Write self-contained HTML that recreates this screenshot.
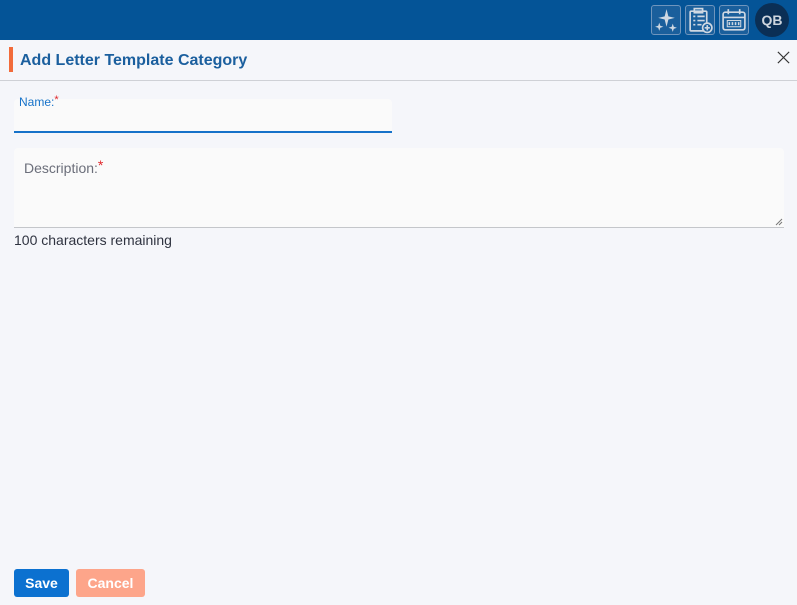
<!DOCTYPE html>
<html><head><style>
body{margin:0;width:797px;height:605px;background:#f5f6fa;font-family:"Liberation Sans",sans-serif;position:relative;overflow:hidden}
.top{position:absolute;left:0;top:0;width:797px;height:40px;background:#045497}
.ib{position:absolute;top:5px;width:30px;height:30px;border:1px solid #6f95bd;border-radius:3px;box-sizing:border-box;background:#1a5f9c}
.av{position:absolute;left:755px;top:3px;width:34px;height:34px;border-radius:50%;background:#0b2f55;color:#cfd6de;font-weight:bold;font-size:14px;text-align:center;line-height:34px}
.hd{position:absolute;top:40px;left:0;width:797px;height:40px;border-bottom:1px solid #cfd1d6}
.bar{position:absolute;left:9px;top:7px;width:4px;height:25px;background:#f26b3a}
.title{position:absolute;left:20px;top:12px;font-size:16px;font-weight:bold;color:#1b5f9e}
.x{position:absolute;left:776px;top:10px}
.name{position:absolute;left:14px;top:99px;width:378px;height:32px;background:#fafafa;border-bottom:2px solid #1672c9;border-radius:4px 4px 0 0;box-sizing:border-box;height:34px}
.lbl{position:absolute;font-size:12px;color:#1672c9;left:19px;top:94px}
.desc{position:absolute;left:14px;top:148px;width:770px;height:79px;background:#fafafa;border-bottom:1px solid #c4c6ca;border-radius:4px 4px 0 0}
.dl{position:absolute;left:24px;top:157px;font-size:14px;color:#6b6e7a}
.r{color:#e0262a}
.rem{position:absolute;left:14px;top:232px;font-size:14px;color:#2f3340}
.btn{position:absolute;top:569px;height:28px;border-radius:3px;color:#fff;font-weight:bold;font-size:14px;text-align:center;line-height:28px}
</style></head><body>
<div class="top">
<div class="ib" style="left:651px"><svg width="28" height="28" viewBox="0 0 27 27"><path d="M14 3 L15.8 10 L22 11.5 L15.8 13 L14 20 L12.2 13 L6 11.5 L12.2 10Z" fill="#cfd8e2"/><path d="M7 16 L8 19 L11 20 L8 21 L7 24 L6 21 L3 20 L6 19Z" fill="#cfd8e2"/><path d="M20 17 L21 20 L24 21 L21 22 L20 25 L19 22 L16 21 L19 20Z" fill="#cfd8e2"/></svg></div>
<div class="ib" style="left:685px"><svg width="28" height="28" viewBox="0 0 27 27" fill="none" stroke="#cfd8e2" stroke-width="1.6"><rect x="4" y="5" width="16" height="19" rx="1"/><rect x="8" y="2.5" width="8" height="4"/><path d="M7 10h2M11 10h7M7 14h2M11 14h7M7 18h2M11 18h4"/><circle cx="20.5" cy="21" r="4.5" fill="#1a5f9c"/><path d="M20.5 18.5v5M18 21h5"/></svg></div>
<div class="ib" style="left:719px"><svg width="28" height="28" viewBox="0 0 27 27" fill="none" stroke="#cfd8e2" stroke-width="1.6"><rect x="3" y="6" width="21" height="17" rx="2"/><path d="M8 3v5M19 3v5M3 11h21"/><rect x="7" y="14" width="13" height="6" stroke-width="1"/><path d="M9 15.5v3M12 15.5v3M15 15.5v3M18 15.5v3" stroke-width="1.5"/></svg></div>
<div class="av">QB</div>
</div>
<div class="hd"><div class="bar"></div><div class="title">Add Letter Template Category</div>
<svg class="x" width="15" height="15" viewBox="0 0 16 16"><path d="M2 2L14 14M14 2L2 14" stroke="#333" stroke-width="1.3"/></svg></div>
<div class="name"></div><div class="lbl">Name:<span class="r" style="vertical-align:3px;font-size:11px">*</span></div>
<div class="desc"><svg style="position:absolute;right:1px;bottom:1px" width="8" height="8"><path d="M1 7L7 1M4 7L7 4" stroke="#777" stroke-width="1"/></svg></div><div class="dl">Description:<span class="r" style="vertical-align:3px">*</span></div>
<div class="rem">100 characters remaining</div>
<div class="btn" style="left:14px;width:55px;background:#0c71d0">Save</div>
<div class="btn" style="left:76px;width:69px;background:#fda58a">Cancel</div>
</body></html>
